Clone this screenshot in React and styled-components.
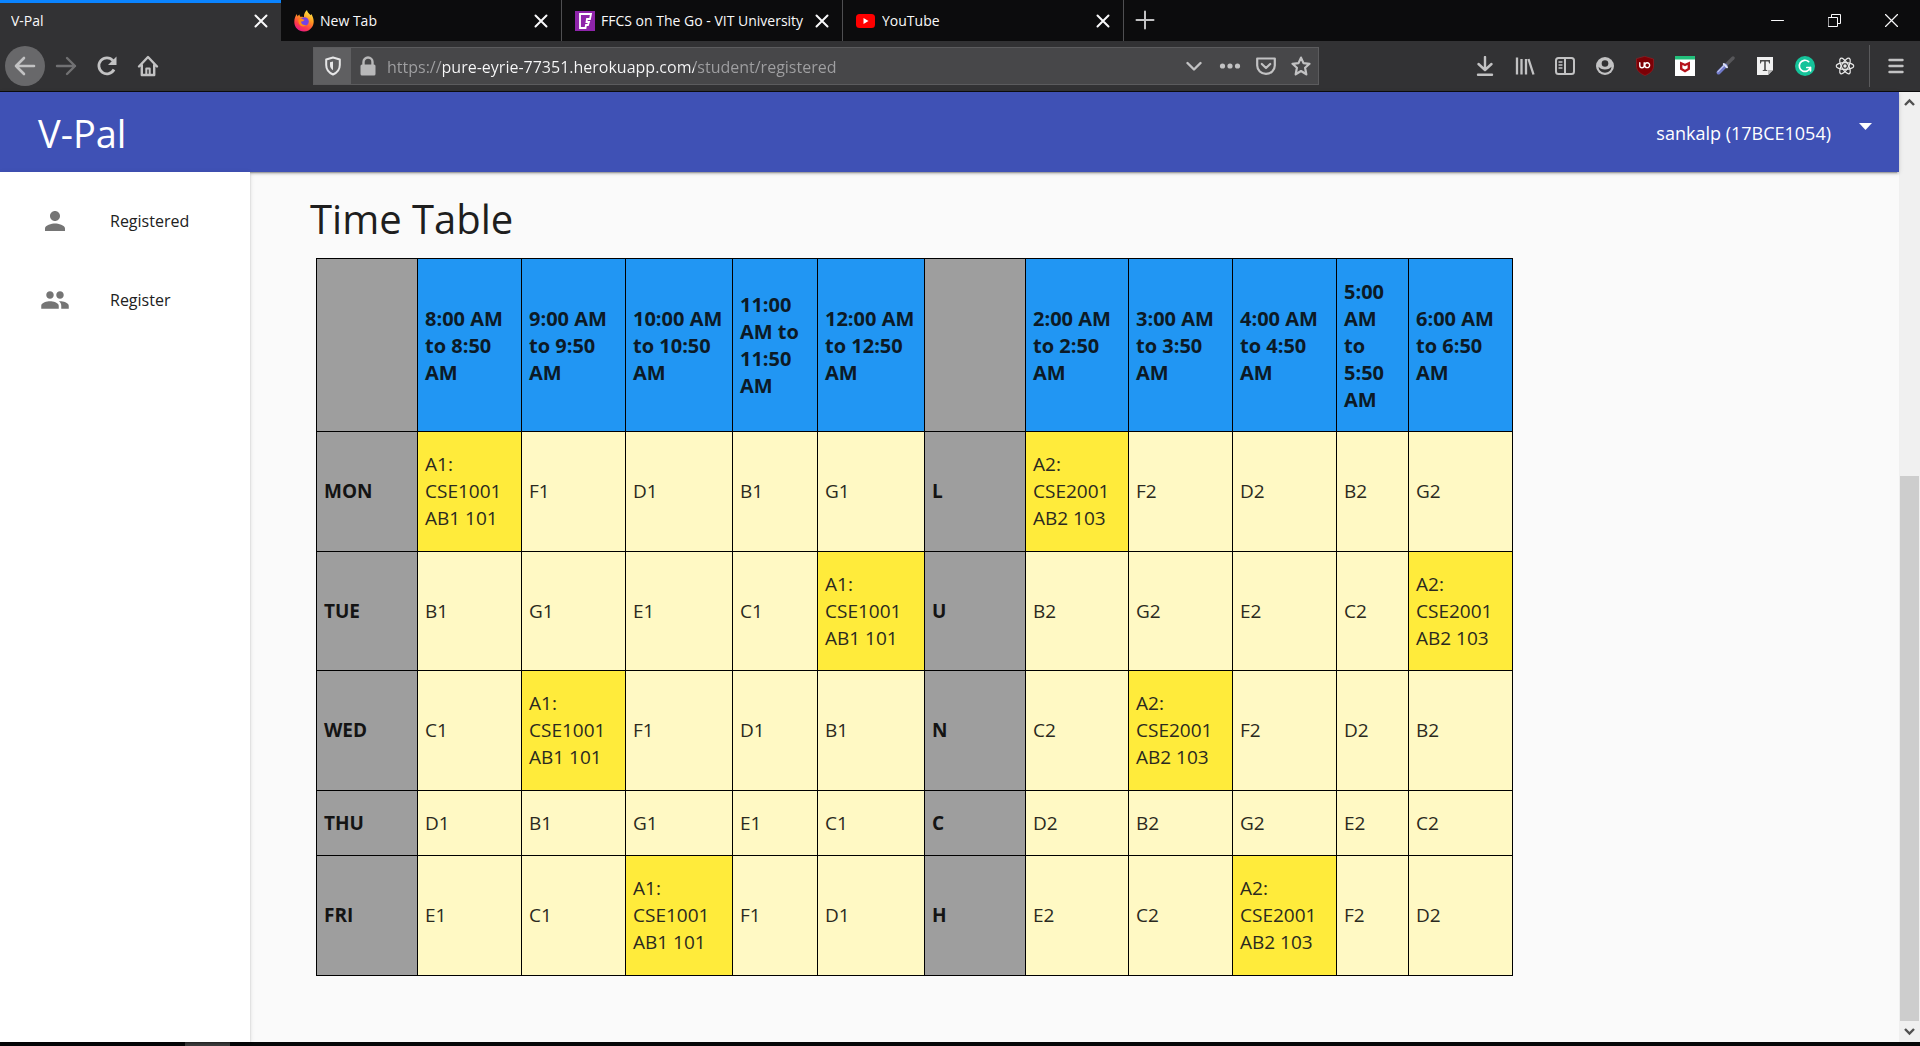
import React from "react";
import styled, { createGlobalStyle, css } from "styled-components";

const sans = `"Open Sans", "Noto Sans", "Liberation Sans", sans-serif`;

const GlobalStyle = createGlobalStyle`
  *, *::before, *::after { box-sizing: border-box; }
  body { margin: 0; background: #060708; font-family: ${sans}; }
  button, input { font: inherit; color: inherit; }
  svg { display: block; flex: none; }
`;

const Window = styled.div`
  display: flex;
  flex-direction: column;
  height: 100vh;
  overflow: hidden;
`;

/* ---------- tab strip ---------- */

const TabStrip = styled.div`
  display: flex;
  height: 41px;
  flex: none;
  background: #0c0c0d;
  color: #f9f9fa;
`;

const Tab = styled.div`
  display: flex;
  align-items: center;
  gap: 6px;
  flex: 0 1 281px;
  min-width: 0;
  padding: 1px 13px 0 13px;
  border-right: 1px solid #4f4f51;
  font-size: 14px;
  ${(p) =>
    p.$active &&
    css`
      padding-left: 11px;
      background: #323234;
      border-right: 0;
      box-shadow: inset 0 3px #0a84ff;
    `}
`;

const TabTitle = styled.span`
  flex: 1;
  min-width: 0;
  overflow: hidden;
  white-space: nowrap;
  line-height: 20px;
`;

const PlainButton = styled.button`
  display: flex;
  align-items: center;
  justify-content: center;
  flex: none;
  padding: 0;
  border: 0;
  background: none;
  width: ${(p) => p.$w || 40}px;
  height: ${(p) => p.$h || 40}px;
`;

const WindowControls = styled.div`
  display: flex;
  margin-left: auto;
`;

/* ---------- navigation toolbar ---------- */

const Toolbar = styled.div`
  display: flex;
  align-items: center;
  height: 51px;
  flex: none;
  padding: 0 4px 0 5px;
  background: #323234;
  border-bottom: 1px solid #0c0c0d;
  color: #c2c2c3;
`;

const NavButtons = styled.div`
  display: flex;
  gap: 1px;
  width: 162px;
  flex: none;
`;

const BackButton = styled(PlainButton)`
  border-radius: 50%;
  background: #68686a;
`;

const ForwardButton = styled(PlainButton)`
  color: #717173;
`;

const UrlBar = styled.div`
  display: flex;
  align-items: center;
  flex: 1;
  min-width: 0;
  height: 38px;
  margin: 0 146px;
  background: #474749;
  border: 1px solid #5c5c5e;
`;

const Shield = styled(PlainButton)`
  background: #5f5f61;
  color: #e6e6e7;
`;

const UrlInput = styled.input`
  flex: 1;
  min-width: 0;
  margin-left: 2px;
  padding: 2px 0 0;
  border: 0;
  outline: 0;
  font-size: 16px;
  line-height: 24px;
  color: #f9f9fa;
  background: linear-gradient(
    90deg,
    #a0a0a2 0 56px,
    #f9f9fa 56px 307px,
    #a0a0a2 307px
  );
  -webkit-background-clip: text;
  background-clip: text;
  -webkit-text-fill-color: transparent;
`;

const Divider = styled.div`
  width: 1px;
  height: 42px;
  margin: 0 6px 0 4px;
  background: #5a5a5c;
`;

/* ---------- page ---------- */

const Viewport = styled.div`
  display: flex;
  flex: 1;
  min-height: 0;
`;

const Page = styled.div`
  display: flex;
  flex-direction: column;
  flex: 1;
  min-width: 0;
  background: #fafafa;
  color: #1e1e1e;
`;

const Header = styled.header`
  display: flex;
  align-items: center;
  height: 80px;
  flex: none;
  padding: 2px 27px 0 38px;
  background: #3f51b5;
  color: #fff;
  box-shadow: 0 2px 2px rgba(0, 0, 0, 0.14), 0 3px 1px -2px rgba(0, 0, 0, 0.2),
    0 1px 5px rgba(0, 0, 0, 0.12);
  z-index: 1;
`;

const Brand = styled.span`
  flex: 1;
  font-size: 38px;
  line-height: 48px;
`;

const UserMenu = styled.button`
  display: flex;
  align-items: center;
  gap: 28px;
  padding: 0;
  border: 0;
  background: none;
  color: #fff;
  font-size: 18px;
  line-height: 24px;

  svg {
    margin-bottom: 14px;
  }
`;

const Body = styled.div`
  display: flex;
  flex: 1;
  min-height: 0;
`;

const Sidebar = styled.nav`
  width: 250px;
  flex: none;
  padding-top: 9px;
  background: #fff;
  box-shadow: 0 2px 2px rgba(0, 0, 0, 0.14), 0 3px 1px -2px rgba(0, 0, 0, 0.2),
    0 1px 5px rgba(0, 0, 0, 0.12);
  z-index: 2;
`;

const NavLink = styled.a`
  display: flex;
  align-items: center;
  gap: 40px;
  height: 79px;
  padding-left: 40px;
  color: #212121;
  font-size: 16px;
  text-decoration: none;

  svg {
    color: #757575;
  }
`;

const Main = styled.main`
  flex: 1;
  min-width: 0;
  padding: 17px 60px;
`;

const Title = styled.h1`
  margin: 0 0 9px;
  font-size: 40px;
  font-weight: 400;
  line-height: 60px;
`;

const Timetable = styled.table`
  width: 1197px;
  margin-left: 6px;
  table-layout: fixed;
  border-collapse: collapse;
  font-size: 19px;
  line-height: 27px;
  text-align: left;
`;

const Row = styled.tr`
  height: ${(p) => p.$h}px;
`;

const cellBox = css`
  padding: 0 8px 0 7px;
  border: 1px solid #000;
`;

const HeadCell = styled.th`
  ${cellBox}
  font-size: 20px;
  background: ${(p) => (p.$blank ? "#9e9e9e" : "#2196f3")};
  color: #0c1a26;
`;

const DayCell = styled.th`
  ${cellBox}
  background: #9e9e9e;
  color: #141414;
`;

const SlotCell = styled.td`
  ${cellBox}
  background: ${(p) => (p.$booked ? "#ffeb3b" : "#fff9c4")};
  color: #2a2920;
`;

const Scrollbar = styled.div`
  display: flex;
  flex-direction: column;
  width: 21px;
  flex: none;
  background: #f0f0f0;
  color: #505050;
`;

const Track = styled.div`
  flex: 1;
  padding-top: 363px;
`;

const Thumb = styled.div`
  height: 100%;
  margin: 0 1px;
  background: #cdcdcd;
`;

const Taskbar = styled.div`
  height: 4px;
  flex: none;
  padding-left: 185px;
  background: #060708;
`;

const TaskbarItem = styled.div`
  width: 45px;
  height: 4px;
  background: #3c3c3c;
`;

/* ---------- icons ---------- */

const Svg = ({ w = 20, h, box = "0 0 20 20", sw = 2, children, ...rest }) => (
  <svg width={w} height={h || w} viewBox={box} fill="none" stroke="currentColor"
    strokeWidth={sw} strokeLinecap="round" strokeLinejoin="round" aria-hidden="true" {...rest}>
    {children}
  </svg>
);

const CloseIcon = () => <Svg w={14} box="0 0 14 14"><path d="M1.5 1.5l11 11M12.5 1.5l-11 11" /></Svg>;
const PlusIcon = () => <Svg style={{ color: "#c2c2c3" }}><path d="M10 1.5v17M1.5 10h17" /></Svg>;
const BackIcon = () => <Svg w={22} box="0 0 22 22" sw={2.6}><path d="M20 11H2M10 3l-8 8 8 8" /></Svg>;
const ForwardIcon = () => <Svg w={22} box="0 0 22 22" sw={2.4}><path d="M2 11h18M12 3l8 8-8 8" /></Svg>;
const ReloadIcon = () => (
  <Svg w={22} box="0 0 22 22" sw={2.8}>
    <path d="M18 14.5A8 8 0 1 1 17 5.6" strokeLinecap="butt" />
    <path d="M20.5 1.500v8.500h-8.500z" fill="currentColor" stroke="none" />
  </Svg>
);
const HomeIcon = () => (
  <Svg w={22} box="0 0 22 22" sw={2.4}>
    <path d="M2 11.500L11 2l9 9.500M4.800 10v10h12.400V10" />
    <path d="M9.300 19.500v-6h3.400v6" strokeWidth="2" />
  </Svg>
);
const ShieldIcon = () => (
  <Svg w={18} h={20} box="0 0 18 20">
    <path d="M9 1.500l6.800 2v5.500c0 4.500-2.800 7.700-6.800 9.500-4-1.800-6.800-5-6.800-9.500V3.500z" />
    <path d="M9 5.500v8.800c-1.800-1.200-3-3-3-5.300V6.200z" fill="currentColor" stroke="none" />
  </Svg>
);
const LockIcon = () => (
  <Svg w={18} h={20} box="0 0 18 20" style={{ color: "#b8b8b9" }}>
    <path d="M4.500 9V6a4.500 4.500 0 0 1 9 0v3" strokeWidth="2.400" />
    <rect x="1.500" y="8.500" width="15" height="11" rx="1.500" fill="currentColor" stroke="none" />
  </Svg>
);
const ChevronIcon = () => <Svg w={16} box="0 0 16 16" sw={2.4}><path d="M1.500 5l6.500 6.500L14.500 5" /></Svg>;
const DotsIcon = () => (
  <Svg w={22} box="0 0 22 22" stroke="none" fill="currentColor">
    <circle cx="3.500" cy="11" r="2.600" /><circle cx="11" cy="11" r="2.600" /><circle cx="18.500" cy="11" r="2.600" />
  </Svg>
);
const PocketIcon = () => (
  <Svg sw={2.2}><path d="M1.200 2.500h17.600v7a8.800 8.400 0 0 1-17.600 0z" /><path d="M5.800 8l4.200 4 4.200-4" /></Svg>
);
const StarIcon = () => (
  <Svg sw={2.2}><path d="M10 1.600l2.500 5.500 6 .7-4.400 4 1.200 6.500L10 15l-5.300 3.300 1.200-6.500-4.400-4 6-.7z" /></Svg>
);
const DownloadIcon = () => <Svg sw={2.4}><path d="M10 1v12.500M3.500 8L10 14l6.500-6M3 18.800h14" /></Svg>;
const LibraryIcon = () => <Svg sw={2.3} strokeLinecap="butt"><path d="M2 1.500v17M6.500 3v15.500M11 3v15.500M13.500 3l5 15.500" /></Svg>;
const SidebarIcon = () => (
  <Svg>
    <rect x="1" y="2" width="18" height="16" rx="2.500" /><path d="M10 2v16" />
    <path d="M4 6h3M4 9h3M4 12h3" strokeWidth="1.300" />
  </Svg>
);
const AccountIcon = () => (
  <Svg>
    <circle cx="10" cy="10" r="9" fill="currentColor" stroke="none" />
    <circle cx="10" cy="7.500" r="3.300" fill="#323234" stroke="none" />
    <path d="M3.600 10.800c1 1.600 3.300 2.600 6.400 2.600s5.400-1 6.400-2.600c0 3.600-3 5.900-6.400 5.900s-6.400-2.300-6.400-5.900z" fill="#323234" stroke="none" />
  </Svg>
);
const UblockIcon = () => (
  <Svg>
    <path d="M10 .5l8.500 2.500v7c0 4.500-3.500 7.500-8.500 9.500-5-2-8.500-5-8.500-9.500V3z" fill="#7d0006" stroke="#a51d22" strokeWidth=".6" />
    <path d="M4.800 6.800v2.700a2.200 2.200 0 0 0 4.400 0V6.800M14.600 9.200a2.400 2.400 0 1 1-4.800 0 2.400 2.400 0 0 1 4.800 0z" stroke="#fff" strokeWidth="1.400" />
  </Svg>
);
const McAfeeIcon = () => (
  <Svg stroke="none">
    <path d="M0 0h20v20H0z" fill="#fff" /><path d="M0 0h20v3.500H0z" fill="#22c07c" />
    <path d="M5 5.500l5 2.300 5-2.300v8L10 16.500l-5-3zm2.400 3.600v3.200L10 13.800l2.600-1.500V9.100L10 10.300z" fill="#b5121b" fillRule="evenodd" />
  </Svg>
);
const PenIcon = () => (
  <Svg>
    <path d="M18 2l-6 6" stroke="#57575a" strokeWidth="3.400" />
    <path d="M10.500 9.500L3.500 16.500" stroke="#6f78c8" strokeWidth="4" />
    <path d="M8.800 8l3.200 3.200" stroke="#dfe3f5" strokeWidth="2" />
    <path d="M9 9.500L2.800 15.800" stroke="#c3c9ee" strokeWidth="1.200" />
  </Svg>
);
const TypeIcon = () => (
  <Svg stroke="none">
    <path d="M2 1h16v13l-5 5H2z" fill="#f0f0f0" /><path d="M18 14h-5v5z" fill="#b4b4b4" />
    <path d="M5 4h10v3.500h-.8l-.8-2h-2.600v8.300l1.500.5v.7H7.700v-.7l1.500-.5V5.500H6.600l-.8 2H5z" fill="#4a4a4a" />
  </Svg>
);
const GrammarlyIcon = () => (
  <Svg>
    <circle cx="10" cy="10" r="10" fill="#15c39a" stroke="none" />
    <path d="M13.600 5.600A5.600 5.600 0 1 0 15.300 11.500h-3.500M15.500 11.300v3.500" stroke="#fff" strokeWidth="1.700" />
  </Svg>
);
const ReactIcon = () => (
  <Svg sw={1.2} style={{ color: "#e8e8e8" }}>
    <ellipse cx="10" cy="10" rx="8.800" ry="3.400" />
    <ellipse cx="10" cy="10" rx="8.800" ry="3.400" transform="rotate(60 10 10)" />
    <ellipse cx="10" cy="10" rx="8.800" ry="3.400" transform="rotate(120 10 10)" />
    <circle cx="10" cy="10" r="1.700" fill="currentColor" stroke="none" />
  </Svg>
);
const MenuIcon = () => <Svg w={16} box="0 0 16 16" sw={2.4}><path d="M1.500 2h13M1.500 8h13M1.500 14h13" /></Svg>;

const FirefoxIcon = () => (
  <svg width="20" height="22" viewBox="0 0 20 22" aria-hidden="true">
    <defs>
      <linearGradient id="ff" x1=".8" y1="0" x2=".3" y2="1">
        <stop offset="0" stopColor="#fff44f" /><stop offset=".4" stopColor="#ff9a1f" />
        <stop offset=".75" stopColor="#ff3b47" /><stop offset="1" stopColor="#e3188c" />
      </linearGradient>
    </defs>
    <path d="M13 0c.4 2.500 2.300 3.500 3.500 5.200l.8-1.200c2.700 4 3.400 9.500.6 13.200A9.800 9.800 0 0 1 10 21.500C4.500 21.500.3 17.500.3 12c0-3.500 1-6 2.600-8l.6 2.400C4.200 5.600 4.800 5 5.500 4.600c0 1 .3 1.700.8 2.200 1.600 0 2.500 0 3.700.5C9.600 4.500 11 1.500 13 0z" fill="url(#ff)" />
    <circle cx="10.500" cy="11.500" r="4.300" fill="#7542e5" />
    <path d="M4.500 9.500c2-1.500 4.500-.8 6 .5-1 1.300-2.300 1.300-3.500 1.600 0 3 3 4 5.500 3.400-3.500 3.300-9 .5-8-5.500z" fill="#ff8a16" />
  </svg>
);
const FfcsIcon = () => (
  <svg width="20" height="20" viewBox="0 0 20 20" aria-hidden="true">
    <path d="M0 0h20v20H0z" fill="#8e24aa" />
    <path d="M5 3h11l-1 5h-3l-.5 3h2.500l-1 3h-2l-.5 3H5z" fill="none" stroke="#fff" strokeWidth="1.800" />
  </svg>
);
const YoutubeIcon = () => (
  <svg width="20" height="14" viewBox="0 0 20 14" aria-hidden="true">
    <rect width="19" height="14" rx="3.500" fill="#f00" /><path d="M7.500 4v6l5-3z" fill="#fff" />
  </svg>
);

const PersonIcon = () => (
  <Svg w={30} box="0 0 24 24" fill="currentColor" stroke="none">
    <path d="M12 12c2.210 0 4-1.790 4-4s-1.790-4-4-4-4 1.790-4 4 1.790 4 4 4zm0 2c-2.670 0-8 1.340-8 4v2h16v-2c0-2.660-5.330-4-8-4z" />
  </Svg>
);
const PeopleIcon = () => (
  <Svg w={30} box="0 0 24 24" fill="currentColor" stroke="none">
    <path d="M16 11c1.660 0 2.990-1.340 2.990-3S17.660 5 16 5c-1.660 0-3 1.340-3 3s1.340 3 3 3zm-8 0c1.660 0 2.990-1.340 2.990-3S9.660 5 8 5C6.340 5 5 6.340 5 8s1.340 3 3 3zm0 2c-2.330 0-7 1.170-7 3.500V19h14v-2.500c0-2.330-4.670-3.500-7-3.500zm8 0c-.290 0-.620.020-.970.050 1.160.840 1.970 1.970 1.970 3.450V19h6v-2.500c0-2.330-4.670-3.500-7-3.500z" />
  </Svg>
);
const CaretIcon = () => (
  <svg width="13" height="7" viewBox="0 0 13 7" aria-hidden="true"><path d="M0 0h13L6.500 7z" fill="#fff" /></svg>
);
const ScrollArrow = ({ d }) => <Svg w={11} box="0 0 11 11" sw={2.4} strokeLinecap="butt" strokeLinejoin="miter"><path d={d} /></Svg>;

/* ---------- data ---------- */

const tabs = [
  { title: "V-Pal", active: true },
  { title: "New Tab", Icon: FirefoxIcon },
  { title: "FFCS on The Go - VIT University", Icon: FfcsIcon },
  { title: "YouTube", Icon: YoutubeIcon },
];

const tools = [
  ["Downloads", DownloadIcon], ["Library", LibraryIcon], ["Sidebars", SidebarIcon],
  ["Account", AccountIcon], ["uBlock Origin", UblockIcon], ["McAfee", McAfeeIcon],
  ["Picker", PenIcon], ["Text", TypeIcon], ["Grammarly", GrammarlyIcon], ["React", ReactIcon],
];

const columns = [101, 104, 104, 107, 85, 107, 101, 103, 104, 104, 72, 104];

const hours = [
  "", "8:00 AM to 8:50 AM", "9:00 AM to 9:50 AM", "10:00 AM to 10:50 AM",
  "11:00 AM to 11:50 AM", "12:00 AM to 12:50 AM", "", "2:00 AM to 2:50 AM",
  "3:00 AM to 3:50 AM", "4:00 AM to 4:50 AM", "5:00 AM to 5:50 AM", "6:00 AM to 6:50 AM",
];

const days = [
  { day: "MON", mid: "L", h: 120, am: ["A1", "F1", "D1", "B1", "G1"], pm: ["A2", "F2", "D2", "B2", "G2"] },
  { day: "TUE", mid: "U", h: 119, am: ["B1", "G1", "E1", "C1", "A1"], pm: ["B2", "G2", "E2", "C2", "A2"] },
  { day: "WED", mid: "N", h: 120, am: ["C1", "A1", "F1", "D1", "B1"], pm: ["C2", "A2", "F2", "D2", "B2"] },
  { day: "THU", mid: "C", h: 65, am: ["D1", "B1", "G1", "E1", "C1"], pm: ["D2", "B2", "G2", "E2", "C2"] },
  { day: "FRI", mid: "H", h: 120, am: ["E1", "C1", "A1", "F1", "D1"], pm: ["E2", "C2", "A2", "F2", "D2"] },
];

const booked = {
  A1: ["CSE1001", "AB1 101"],
  A2: ["CSE2001", "AB2 103"],
};

const Slot = ({ slot }) => {
  const course = booked[slot];
  if (!course) return <SlotCell>{slot}</SlotCell>;
  return (
    <SlotCell $booked>
      {slot}:<br />{course[0]}<br />{course[1]}
    </SlotCell>
  );
};

export default function App() {
  return (
    <Window>
      <GlobalStyle />
      <TabStrip>
        {tabs.map(({ title, active, Icon }) => (
          <Tab key={title} $active={active}>
            {Icon && <Icon />}
            <TabTitle>{title}</TabTitle>
            <PlainButton $w={14} $h={20} aria-label={`Close ${title}`}><CloseIcon /></PlainButton>
          </Tab>
        ))}
        <PlainButton $w={42} aria-label="Open a new tab"><PlusIcon /></PlainButton>
        <WindowControls>
          <PlainButton $w={57} aria-label="Minimize">
            <Svg w={13} box="0 0 13 13" sw={1}><path d="M.5 6.500h12" /></Svg>
          </PlainButton>
          <PlainButton $w={57} aria-label="Restore">
            <Svg w={13} box="0 0 13 13" sw={1} strokeLinejoin="miter"><path d="M.5 3.500h9v9h-9zM3.500 3.500v-3h9v9h-3" /></Svg>
          </PlainButton>
          <PlainButton $w={57} aria-label="Close window">
            <Svg w={13} box="0 0 13 13" sw={1.2}><path d="M.5.5l12 12M12.500.5l-12 12" /></Svg>
          </PlainButton>
        </WindowControls>
      </TabStrip>

      <Toolbar>
        <NavButtons>
          <BackButton aria-label="Back"><BackIcon /></BackButton>
          <ForwardButton aria-label="Forward"><ForwardIcon /></ForwardButton>
          <PlainButton aria-label="Reload"><ReloadIcon /></PlainButton>
          <PlainButton $w={39} aria-label="Home"><HomeIcon /></PlainButton>
        </NavButtons>
        <UrlBar>
          <Shield $w={37} $h={36} aria-label="Tracking protection"><ShieldIcon /></Shield>
          <PlainButton $w={34} $h={36} aria-label="Connection secure"><LockIcon /></PlainButton>
          <UrlInput aria-label="Address" defaultValue="https://pure-eyrie-77351.herokuapp.com/student/registered" />
          <PlainButton $w={36} $h={36} aria-label="Show history"><ChevronIcon /></PlainButton>
          <PlainButton $w={36} $h={36} aria-label="Page actions"><DotsIcon /></PlainButton>
          <PlainButton $w={36} $h={36} aria-label="Save to Pocket"><PocketIcon /></PlainButton>
          <PlainButton $w={34} $h={36} aria-label="Bookmark this page"><StarIcon /></PlainButton>
        </UrlBar>
        {tools.map(([name, Icon]) => (
          <PlainButton key={name} aria-label={name}><Icon /></PlainButton>
        ))}
        <Divider />
        <PlainButton aria-label="Open menu"><MenuIcon /></PlainButton>
      </Toolbar>

      <Viewport>
        <Page>
          <Header>
            <Brand>V-Pal</Brand>
            <UserMenu>sankalp (17BCE1054)<CaretIcon /></UserMenu>
          </Header>
          <Body>
            <Sidebar>
              <NavLink href="#registered"><PersonIcon />Registered</NavLink>
              <NavLink href="#register"><PeopleIcon />Register</NavLink>
            </Sidebar>
            <Main>
              <Title>Time Table</Title>
              <Timetable>
                <colgroup>
                  {columns.map((w, i) => <col key={i} width={w} />)}
                </colgroup>
                <thead>
                  <Row $h={173}>
                    {hours.map((h, i) => <HeadCell key={i} scope="col" $blank={!h}>{h}</HeadCell>)}
                  </Row>
                </thead>
                <tbody>
                  {days.map((d) => (
                    <Row key={d.day} $h={d.h}>
                      <DayCell scope="row">{d.day}</DayCell>
                      {d.am.map((s) => <Slot key={s} slot={s} />)}
                      <DayCell>{d.mid}</DayCell>
                      {d.pm.map((s) => <Slot key={s} slot={s} />)}
                    </Row>
                  ))}
                </tbody>
              </Timetable>
            </Main>
          </Body>
        </Page>
        <Scrollbar aria-hidden="true">
          <PlainButton as="span" $w={21} $h={21}><ScrollArrow d="M1 8l4.500-4.500L10 8" /></PlainButton>
          <Track><Thumb /></Track>
          <PlainButton as="span" $w={21} $h={21}><ScrollArrow d="M1 3l4.500 4.500L10 3" /></PlainButton>
        </Scrollbar>
      </Viewport>

      <Taskbar><TaskbarItem /></Taskbar>
    </Window>
  );
}
